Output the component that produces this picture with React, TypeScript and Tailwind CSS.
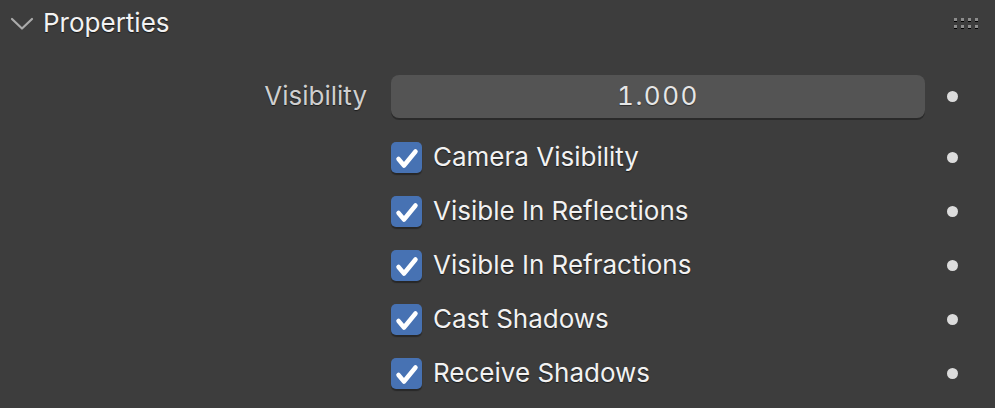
import React from "react";

const font = { fontFamily: "Inter, 'Noto Sans', sans-serif" };

function Dot() {
  return (
    <div className="w-[56px] flex items-center justify-center pl-[0px]">
      <div className="w-[11px] h-[11px] rounded-full bg-[#dcdcdc] ml-[-1px]" />
    </div>
  );
}

function Check({ label }: { label: string }) {
  return (
    <div className="flex items-center h-[54px]">
      <div className="w-[391px]" />
      <div className="w-[534px] flex items-center">
        <div className="w-[31px] h-[31px] rounded-[5px] bg-[#4772b3] shadow-[0_2px_1px_rgba(0,0,0,0.35)] flex items-center justify-center">
          <svg width="31" height="31" viewBox="0 0 31 31">
            <path d="M7.5 17 L13 23.5 L24.5 9.5" fill="none" stroke="#ffffff" strokeWidth="4.5" strokeLinecap="round" strokeLinejoin="round" />
          </svg>
        </div>
        <span className="ml-[11px] text-[26px] text-[#f2f2f2] [text-shadow:0_1px_1px_rgba(0,0,0,0.55)] leading-none">{label}</span>
      </div>
      <Dot />
    </div>
  );
}

export default function App() {
  return (
    <div className="w-[995px] h-[408px] bg-[#3d3d3d] overflow-hidden select-none" style={font}>
      <div className="flex items-center h-[45px] pl-[10px]">
        <svg width="24" height="16" viewBox="0 0 24 16" className="mt-[2px]">
          <path d="M2 3 L12 12.5 L22 3" fill="none" stroke="#ababab" strokeWidth="2.2" strokeLinecap="round" strokeLinejoin="round" />
        </svg>
        <span className="ml-[9px] text-[26px] text-[#f2f2f2] [text-shadow:0_1px_1px_rgba(0,0,0,0.6)] leading-none">Properties</span>
        <div className="ml-auto mr-[17px] grid grid-cols-4 gap-x-[4px] gap-y-[4px]">
          {Array.from({ length: 8 }).map((_, i) => (
            <div key={i} className="w-[3px] h-[3px] bg-[#8c8c8c] shadow-[0_1px_0_#000]" />
          ))}
        </div>
      </div>
      <div className="pt-[29px]">
        <div className="flex items-center h-[44px]">
          <div className="w-[367px] text-right text-[26px] text-[#cfcfcf] [text-shadow:0_1px_1px_rgba(0,0,0,0.55)] leading-none">Visibility</div>
          <div className="w-[24px]" />
          <div className="w-[534px] h-[43px] rounded-[8px] bg-[#545454] shadow-[0_2px_0_rgba(0,0,0,0.3)] flex items-center justify-center text-[26px] text-[#e6e6e6] [text-shadow:0_1px_1px_rgba(0,0,0,0.45)] leading-none tabular-nums tracking-[1.5px]">
            1.000
          </div>
          <Dot />
        </div>
        <div className="mt-[12px]">
          <Check label="Camera Visibility" />
          <Check label="Visible In Reflections" />
          <Check label="Visible In Refractions" />
          <Check label="Cast Shadows" />
          <Check label="Receive Shadows" />
        </div>
      </div>
    </div>
  );
}
